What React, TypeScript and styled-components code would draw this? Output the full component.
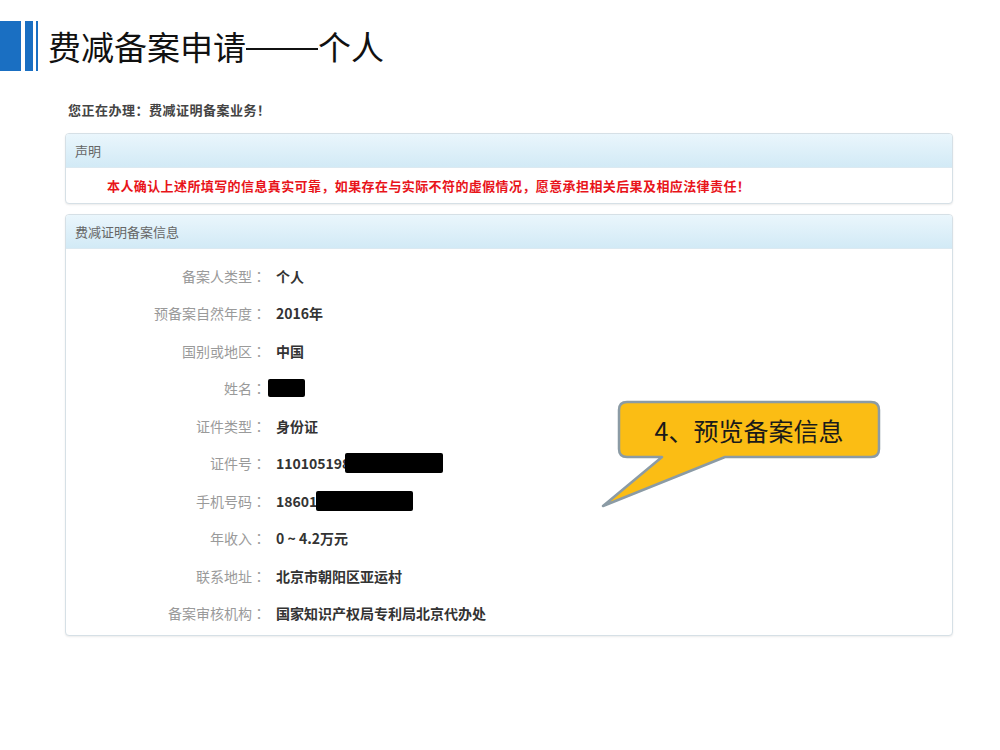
import styled, { createGlobalStyle } from 'styled-components';

const Global = createGlobalStyle`
  html, body {
    margin: 0;
    padding: 0;
    background: #ffffff;
  }
  body {
    font-family: "Noto Sans CJK SC", "Noto Sans", sans-serif;
  }
`

const Page = styled.div`
  position: relative;
  width: 1000px;
  height: 750px;
  overflow: hidden;
  background: #fff;
`

const Header = styled.div`
  display: flex;
  align-items: center;
  padding-top: 21px;
  height: 50px;
`

const Bar = styled.div<{ $w: number; $gap: number }>`
  width: ${(p) => p.$w}px;
  height: 50px;
  margin-right: ${(p) => p.$gap}px;
  background: #1a6fc2;
`

const Title = styled.h1`
  margin: 0 0 0 10px;
  font-size: 33px;
  font-weight: 400;
  line-height: 50px;
  color: #111;
`

const Dash = styled.span`
  display: inline-block;
  width: 72px;
  height: 2px;
  background: #111;
  vertical-align: middle;
  margin: 0 0 4px;
`

const Content = styled.div`
  margin: 29px 0 0 65px;
  width: 888px;
`

const Notice = styled.div`
  margin-left: 3px;
  font-size: 13px;
  line-height: 20px;
  font-weight: 700;
  letter-spacing: 0.5px;
  color: #444;
`

const Panel = styled.div<{ $mt: number }>`
  margin-top: ${(p) => p.$mt}px;
  border: 1px solid #d6e0e6;
  border-radius: 4px;
  box-shadow: 0 1px 2px rgba(0, 0, 0, 0.08);
  overflow: hidden;
  background: #fff;
`

const PanelHead = styled.div`
  height: 33px;
  line-height: 33px;
  padding-left: 9px;
  font-size: 13px;
  color: #666;
  background: linear-gradient(#eaf6fc, #d2eaf6);
  border-bottom: 1px solid #dbe9f1;
`

const Warning = styled.div`
  height: 35px;
  line-height: 35px;
  padding-left: 41px;
  font-size: 13px;
  font-weight: 700;
  letter-spacing: 0.4px;
  color: #e8141a;
`

const InfoGrid = styled.div`
  display: grid;
  grid-template-columns: 200px 1fr;
  grid-auto-rows: 37.5px;
  column-gap: 10px;
  padding: 8px 0 3px;
  align-items: center;
  font-size: 14px;
`

const Label = styled.div`
  display: flex;
  justify-content: flex-end;
  color: #9a9a9a;
`

const Colon = styled.span`
  display: inline-block;
  width: 14px;
  text-align: center;
  font-family: "Noto Sans CJK JP", "Noto Sans CJK SC", sans-serif;
`

const Value = styled.div`
  display: flex;
  align-items: center;
  font-weight: 700;
  color: #333;
`

const Redact = styled.span<{ $w: number; $h: number; $ml: number }>`
  display: inline-block;
  width: ${(p) => p.$w}px;
  height: ${(p) => p.$h}px;
  margin-left: ${(p) => p.$ml}px;
  background: #000;
  border-radius: 2px;
`

const Callout = styled.div`
  position: absolute;
  left: 600px;
  top: 400px;
  width: 282px;
  height: 110px;
`

const CalloutText = styled.div`
  position: absolute;
  left: 19px;
  top: 2px;
  width: 260px;
  height: 55px;
  display: flex;
  align-items: center;
  justify-content: center;
  font-size: 25px;
  color: #1a1a1a;
`

const rows: { label: string; value: string; redact?: { w: number; h: number; ml: number } }[] = [
  { label: '备案人类型', value: '个人' },
  { label: '预备案自然年度', value: '2016年' },
  { label: '国别或地区', value: '中国' },
  { label: '姓名', value: '', redact: { w: 37, h: 18, ml: -8 } },
  { label: '证件类型', value: '身份证' },
  { label: '证件号', value: '110105198', redact: { w: 98, h: 20, ml: -5 } },
  { label: '手机号码', value: '18601', redact: { w: 97, h: 20, ml: -1 } },
  { label: '年收入', value: '0 ~ 4.2万元' },
  { label: '联系地址', value: '北京市朝阳区亚运村' },
  { label: '备案审核机构', value: '国家知识产权局专利局北京代办处' },
]

export default function App() {
  return (
    <Page>
      <Global />
      <Header>
        <Bar $w={21} $gap={4} />
        <Bar $w={8} $gap={3} />
        <Bar $w={2} $gap={0} />
        <Title>
          费减备案申请<Dash />个人
        </Title>
      </Header>

      <Content>
        <Notice>您正在办理：费减证明备案业务！</Notice>

        <Panel $mt={13}>
          <PanelHead>声明</PanelHead>
          <Warning>
            本人确认上述所填写的信息真实可靠，如果存在与实际不符的虚假情况，愿意承担相关后果及相应法律责任！
          </Warning>
        </Panel>

        <Panel $mt={10}>
          <PanelHead>费减证明备案信息</PanelHead>
          <InfoGrid>
            {rows.map((r) => [
              <Label key={r.label + '-l'}>
                {r.label}
                <Colon>：</Colon>
              </Label>,
              <Value key={r.label + '-v'}>
                {r.value}
                {r.redact && <Redact $w={r.redact.w} $h={r.redact.h} $ml={r.redact.ml} />}
              </Value>,
            ])}
          </InfoGrid>
        </Panel>
      </Content>

      <Callout>
        <svg width="282" height="110" viewBox="0 0 282 110">
          <path
            d="M 27 2 H 271 Q 279 2 279 10 V 49 Q 279 57 271 57 H 125 L 3 106 L 62 57 H 27 Q 19 57 19 49 V 10 Q 19 2 27 2 Z"
            fill="#fbbd14"
            stroke="#8b9ba5"
            strokeWidth="2.5"
            strokeLinejoin="round"
          />
        </svg>
        <CalloutText>4、预览备案信息</CalloutText>
      </Callout>
    </Page>
  )
}
